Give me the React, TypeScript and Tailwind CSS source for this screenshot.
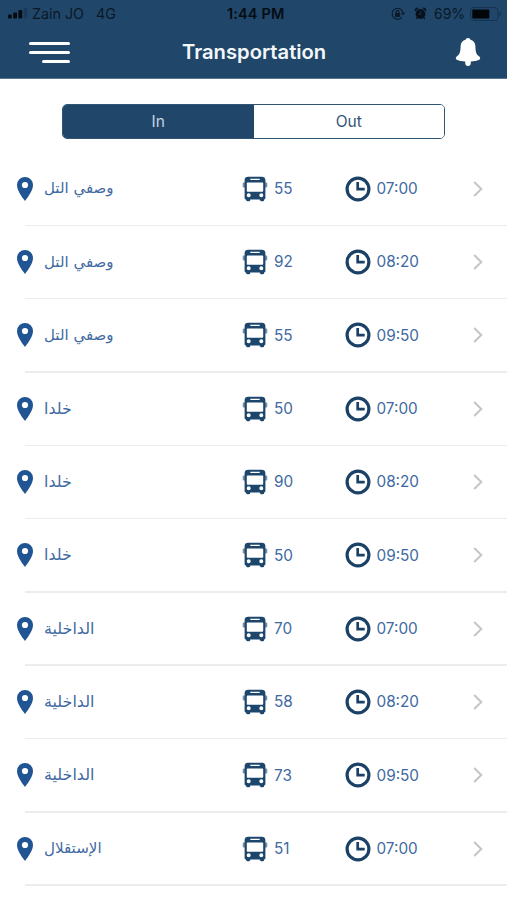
import React from "react";

type Trip = { place: string; size: string; bus: string; time: string };

const WASFI = { place: "وصفي التل", size: "text-[15px]" };
const KHALDA = { place: "خلدا", size: "text-[15.8px]" };
const DAKHLIA = { place: "الداخلية", size: "text-[15.9px]" };
const ISTIQLAL = { place: "الإستقلال", size: "text-[15.1px]" };

const trips: Trip[] = [
  { ...WASFI, bus: "55", time: "07:00" },
  { ...WASFI, bus: "92", time: "08:20" },
  { ...WASFI, bus: "55", time: "09:50" },
  { ...KHALDA, bus: "50", time: "07:00" },
  { ...KHALDA, bus: "90", time: "08:20" },
  { ...KHALDA, bus: "50", time: "09:50" },
  { ...DAKHLIA, bus: "70", time: "07:00" },
  { ...DAKHLIA, bus: "58", time: "08:20" },
  { ...DAKHLIA, bus: "73", time: "09:50" },
  { ...ISTIQLAL, bus: "51", time: "07:00" },
];

function SignalIcon() {
  return (
    <svg className="h-[11px] w-[20px] shrink-0" viewBox="0 0 20 11">
      <rect x="0" y="6.5" width="3.8" height="4" rx="1" fill="#050b12" />
      <rect x="5.2" y="4.5" width="3.8" height="6" rx="1" fill="#050b12" />
      <rect x="10.4" y="2" width="3.8" height="8.5" rx="1" fill="#050b12" />
      <rect x="15.8" y="0" width="3.6" height="10.5" rx="1" fill="#1a3a58" />
    </svg>
  );
}

function RotationLockIcon() {
  return (
    <svg className="h-[14px] w-[14px] shrink-0" viewBox="0 0 14 14" fill="none" stroke="#0b1a29" strokeWidth="1.1">
      <path d="M12.100 5.800A5.500 5.500 0 1 0 10.900 10.400" />
      <path d="M10 5.800h4l-2 2.600z" fill="#0b1a29" stroke="none" />
      <rect x="4" y="6" width="5.200" height="4" rx=".5" fill="#0b1a29" stroke="none" />
      <path d="M5.200 6.300V5a1.400 1.400 0 0 1 2.800 0v1.300" />
    </svg>
  );
}

function AlarmIcon() {
  return (
    <svg className="h-[13px] w-[13px] shrink-0" viewBox="0 0 13 13">
      <path d="M.900 4.600A2.700 2.700 0 0 1 4.600 1zM12.100 4.600A2.700 2.700 0 0 0 8.400 1z" fill="#07111c" />
      <path d="M3.200 10.500 2.300 12M9.800 10.500l.9 1.500" stroke="#07111c" strokeWidth="1.3" />
      <circle cx="6.500" cy="7" r="4.900" fill="#07111c" />
      <path d="M6.800 4.200v3.200H4.400" fill="none" stroke="#1a3a57" strokeWidth=".8" />
    </svg>
  );
}

function BatteryIcon() {
  return (
    <svg className="h-[14px] w-[32px] shrink-0" viewBox="0 0 32 14">
      <rect x=".6" y=".6" width="27.4" height="12.8" rx="3" fill="none" stroke="#153350" strokeWidth="1" />
      <rect x="2.3" y="2.4" width="17" height="9.2" rx="1.2" fill="#02060a" />
      <path d="M29.5 4.8q1.6.6 1.600 2.200t-1.600 2.200z" fill="#153350" />
    </svg>
  );
}

function BellIcon() {
  return (
    <svg className="h-[28px] w-[26px] shrink-0" viewBox="0 0 26 28" fill="#fff">
      <path d="M13 0c1.300 0 2.300.8 2.400 1.800 3 .6 4.900 3 5 6.400.1 5.500.9 8.200 3.600 10 .9.600 1.300 1.300 1.200 2-.2 1.600-2.900 2.900-9.400 3.200v1.600c0 1.900-1.100 3-2.800 3s-2.800-1.100-2.800-3v-1.600C3.700 23.100 1 21.800.8 20.200c-.1-.7.3-1.400 1.200-2 2.700-1.800 3.500-4.500 3.600-10 .1-3.400 2-5.800 5-6.400C10.700.8 11.700 0 13 0z" />
    </svg>
  );
}

function PinIcon() {
  return (
    <svg className="h-[24px] w-[16px] shrink-0" viewBox="0 0 16 24">
      <path fillRule="evenodd" fill="#205493" d="M8 0a8 8 0 0 1 8 8c0 5-4.200 11.100-8 16C4.200 19.100 0 13 0 8a8 8 0 0 1 8-8zm0 4.900a3.100 3.100 0 1 0 0 6.200 3.100 3.100 0 0 0 0-6.200z" />
    </svg>
  );
}

function BusIcon() {
  return (
    <svg className="h-[26px] w-[26px] shrink-0" viewBox="0 0 26 26">
      <path d="M1.700 6.500H3.500v5H1.700a1 1 0 0 1-1-1v-3a1 1 0 0 1 1-1zM22.500 6.500h1.800a1 1 0 0 1 1 1v3a1 1 0 0 1-1 1h-1.800z" fill="#7890a6" />
      <path
        fillRule="evenodd"
        fill="#1c466c"
        d="M6.200.700h13.600c2.200 0 3.600 1.200 3.600 3.300v18c0 .9-.5 1.400-1.300 1.500v.6c0 .8-.5 1.200-1.300 1.200h-1.700c-.8 0-1.300-.4-1.300-1.200v-.6H8.200v.6c0 .8-.5 1.200-1.300 1.200H5.200c-.8 0-1.300-.4-1.300-1.200v-.6C3.100 23.400 2.600 22.900 2.600 22V4C2.600 1.900 4 .700 6.200.700zM8.300 2.700v1.300h9.400V2.700zM5.500 6.400c-.4 0-.7.3-.7.700v7.900c0 .4.300.7.700.7h15c.4 0 .7-.3.700-.7V7.100c0-.4-.3-.7-.7-.7zM6.700 17.300a2 2 0 1 0 0 4 2 2 0 0 0 0-4zm12.600 0a2 2 0 1 0 0 4 2 2 0 0 0 0-4z"
      />
    </svg>
  );
}

function ClockIcon() {
  return (
    <svg className="h-[26px] w-[26px] shrink-0" viewBox="0 0 26 26" fill="none" stroke="#1b4166">
      <circle cx="13" cy="13" r="10.900" strokeWidth="3.200" />
      <path d="M12.700 6v7.200h7" strokeWidth="2.700" />
    </svg>
  );
}

function ChevronIcon() {
  return (
    <svg className="h-[16px] w-[10px] shrink-0" viewBox="0 0 10 16" fill="none" stroke="#c5c5c8" strokeWidth="2">
      <path d="m1.200 1 7.100 7-7.100 7" />
    </svg>
  );
}

function TripRow({ trip }: { trip: Trip }) {
  return (
    <li className="flex h-[73.33px] shrink-0 flex-col pl-[17px] text-[#4069a1]">
      <div className="flex flex-1 items-center">
        <PinIcon />
        <span className={`ml-[11px] flex h-6 w-[198px] items-center ${trip.size} font-['DejaVu_Sans',sans-serif]`} lang="ar">
          <bdi className="whitespace-nowrap">{trip.place}</bdi>
        </span>
        <BusIcon />
        <span className="ml-[6px] w-[71px] pt-[1.500px] text-[15.300px]">{trip.bus}</span>
        <ClockIcon />
        <span className="ml-[5.500px] w-[96px] pt-[1.500px] text-[15.300px]">{trip.time}</span>
        <ChevronIcon />
      </div>
      <div className="ml-2 h-[1.500px] bg-[#ececee]" />
    </li>
  );
}

export default function App() {
  return (
    <div className="flex h-[900px] w-[507px] flex-col overflow-hidden bg-white font-['Inter',sans-serif]">
      <header className="h-[79px] shrink-0 border-b border-[#58748e] bg-[#204769]">
        <div className="flex h-[27px] items-center pl-2 text-[14px] text-[#0a1827]">
          <SignalIcon />
          <span className="ml-1 w-[64px] whitespace-nowrap text-[14.300px]">Zain JO</span>
          <span className="w-[131px] text-[14.300px]">4G</span>
          <span className="w-[164px] whitespace-nowrap text-[14.500px] font-semibold tracking-[0.15px] text-[#050c14]">1:44 PM</span>
          <RotationLockIcon />
          <span className="w-[9px]" />
          <AlarmIcon />
          <span className="ml-[7px] w-[36px]">69%</span>
          <BatteryIcon />
        </div>
        <div className="flex h-[50px] items-center pl-[29px]">
          <div className="flex w-[41px] flex-col items-end gap-[6px]">
            <div className="h-[3px] w-full rounded-full bg-white" />
            <div className="h-[3px] w-full rounded-full bg-white" />
            <div className="h-[3px] w-[28px] rounded-full bg-white" />
          </div>
          <h1 className="ml-[112px] w-[273px] text-[20.200px] font-semibold text-[#f3f7fa]">Transportation</h1>
          <BellIcon />
        </div>
      </header>
      <div className="flex h-[73.700px] shrink-0 px-[62px] pt-[24.500px]">
        <div className="flex h-[35px] w-[384px] overflow-hidden rounded-[5px] border-[1.500px] border-[#315675] text-[15.500px]">
          <button className="flex-1 bg-[#204769] pt-px text-[#c3d4e2]">In</button>
          <button className="flex-1 bg-white pt-px text-[#315675]">Out</button>
        </div>
      </div>
      <ul className="flex flex-col">
        {trips.map((trip, i) => (
          <TripRow key={i} trip={trip} />
        ))}
      </ul>
    </div>
  );
}
